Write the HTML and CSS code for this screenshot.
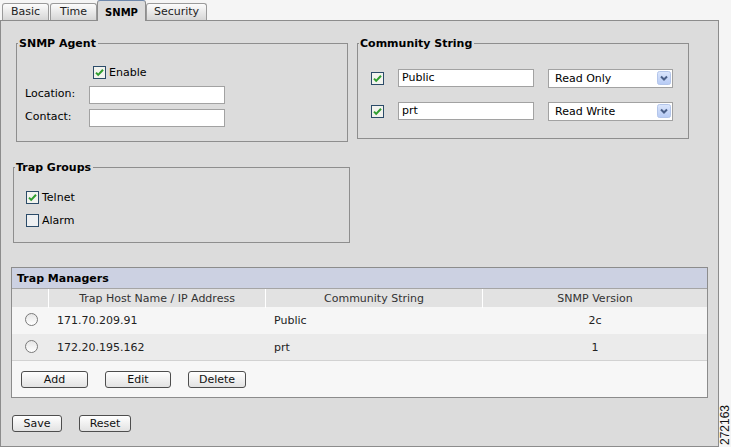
FILE: index.html
```html
<!DOCTYPE html>
<html>
<head>
<meta charset="utf-8">
<link rel="stylesheet" href="styles.css">
</head>
<body>
<div class="page">
  <div class="main">
    <div class="tabs">
      <div class="tab t-basic">Basic</div>
      <div class="tab t-time">Time</div>
      <div class="tab active t-snmp">SNMP</div>
      <div class="tab t-sec">Security</div>
    </div>
    <div class="panel">
      <div class="top">
        <div class="left">
          <div class="group agent">
            <div class="legend">SNMP Agent</div>
            <div class="agent-body">
              <div class="check-row enable">
                <svg class="cb" width="13" height="13" viewBox="0 0 13 13"><rect x="0.5" y="0.5" width="12" height="12" fill="#f2f3ee" stroke="#2b4b69"/><path d="M3 6.6l2.2 2.3L10 3.8" fill="none" stroke="#2f9e2f" stroke-width="2"/></svg>
                <span>Enable</span>
              </div>
              <div class="field"><span class="lbl">Location:</span><span class="input"></span></div>
              <div class="field"><span class="lbl">Contact:</span><span class="input"></span></div>
            </div>
          </div>
          <div class="group traps">
            <div class="legend">Trap Groups</div>
            <div class="traps-body">
              <div class="check-row">
                <svg class="cb" width="13" height="13" viewBox="0 0 13 13"><rect x="0.5" y="0.5" width="12" height="12" fill="#f2f3ee" stroke="#2b4b69"/><path d="M3 6.6l2.2 2.3L10 3.8" fill="none" stroke="#2f9e2f" stroke-width="2"/></svg>
                <span>Telnet</span>
              </div>
              <div class="check-row">
                <svg class="cb" width="13" height="13" viewBox="0 0 13 13"><rect x="0.5" y="0.5" width="12" height="12" fill="#eef0f2" stroke="#2b4b69"/></svg>
                <span>Alarm</span>
              </div>
            </div>
          </div>
        </div>
        <div class="group community">
          <div class="legend">Community String</div>
          <div class="community-body">
            <div class="crow">
              <svg class="cb" width="13" height="13" viewBox="0 0 13 13"><rect x="0.5" y="0.5" width="12" height="12" fill="#f2f3ee" stroke="#2b4b69"/><path d="M3 6.6l2.2 2.3L10 3.8" fill="none" stroke="#2f9e2f" stroke-width="2"/></svg>
              <span class="input">Public</span>
              <div class="select"><span>Read Only</span>
                <svg width="14" height="14" viewBox="0 0 14 14"><defs><linearGradient id="ag" x1="0" y1="0" x2="0" y2="1"><stop offset="0" stop-color="#dbe6fc"/><stop offset="1" stop-color="#b6caf4"/></linearGradient></defs><rect x="0.5" y="0.5" width="13" height="13" rx="2" fill="url(#ag)" stroke="#b3c5ea"/><path d="M4 5.5l3 3 3-3" fill="none" stroke="#4a5f88" stroke-width="2"/></svg>
              </div>
            </div>
            <div class="crow">
              <svg class="cb" width="13" height="13" viewBox="0 0 13 13"><rect x="0.5" y="0.5" width="12" height="12" fill="#f2f3ee" stroke="#2b4b69"/><path d="M3 6.6l2.2 2.3L10 3.8" fill="none" stroke="#2f9e2f" stroke-width="2"/></svg>
              <span class="input">prt</span>
              <div class="select"><span>Read Write</span>
                <svg width="14" height="14" viewBox="0 0 14 14"><rect x="0.5" y="0.5" width="13" height="13" rx="2" fill="url(#ag)" stroke="#b3c5ea"/><path d="M4 5.5l3 3 3-3" fill="none" stroke="#4a5f88" stroke-width="2"/></svg>
              </div>
            </div>
          </div>
        </div>
      </div>

      <div class="managers">
        <div class="mhead">Trap Managers</div>
        <div class="grow cols">
          <div class="c"></div>
          <div class="c">Trap Host Name / IP Address</div>
          <div class="c">Community String</div>
          <div class="c last">SNMP Version</div>
        </div>
        <div class="grow row r1">
          <div><span class="radio"></span></div>
          <div class="tx">171.70.209.91</div>
          <div class="tx">Public</div>
          <div class="ctr">2c</div>
        </div>
        <div class="grow row r2">
          <div><span class="radio"></span></div>
          <div class="tx">172.20.195.162</div>
          <div class="tx">prt</div>
          <div class="ctr">1</div>
        </div>
        <div class="mbtns">
          <div class="btn b-add">Add</div>
          <div class="btn b-edit">Edit</div>
          <div class="btn b-del">Delete</div>
        </div>
      </div>

      <div class="actions">
        <div class="btn b-save">Save</div>
        <div class="btn b-reset">Reset</div>
      </div>
    </div>
  </div>
  <div class="side"><span>272163</span></div>
</div>
</body>
</html>
```
FILE: styles.css
```css
body {
  margin: 0;
  background: #f5f5f5;
  font: 11px/13px "DejaVu Sans", Verdana, sans-serif;
  color: #000;
}
.page {
  display: flex;
  width: 731px;
  height: 447px;
}
.main {
  width: 719px;
  display: flex;
  flex-direction: column;
}
.tabs {
  display: flex;
  align-items: flex-end;
  height: 20px;
  padding-left: 2px;
}
.tab {
  box-sizing: border-box;
  height: 17px;
  border: 1px solid #9a9a9a;
  border-bottom: none;
  border-radius: 3px 3px 0 0;
  background: linear-gradient(#fcfcfc, #d6d6d6);
  text-align: center;
  line-height: 15px;
  color: #222;
}
.t-basic { width: 47px; margin-right: 1px; }
.t-time { width: 47px; }
.t-snmp { width: 49px; }
.t-sec { width: 61px; }
.tab.active {
  height: 21px;
  margin-bottom: -1px;
  background: #dcdcdc;
  border-color: #8d8d8d;
  border-top-color: #6f88ab;
  font-weight: bold;
  font-size: 10px;
  padding-top: 2px;
  line-height: 19px;
  color: #000;
  position: relative;
  z-index: 1;
}
.panel {
  box-sizing: border-box;
  height: 427px;
  border: 1px solid #8c8c8c;
  background: #dcdcdc;
}
.top {
  display: flex;
  align-items: flex-start;
  padding: 22px 0 0 12px;
}
.left {
  width: 337px;
  display: flex;
  flex-direction: column;
}
.group {
  box-sizing: border-box;
  border: 1px solid #8e8e8e;
}
.legend {
  width: max-content;
  margin: -7px 0 0 1px;
  padding: 0 2px 0 1px;
  background: #dcdcdc;
  font-weight: bold;
  line-height: 13px;
}
.agent {
  width: 332px;
  height: 99px;
  margin-left: 3px;
}
.agent-body {
  padding: 16px 0 0 8px;
}
.check-row {
  display: flex;
  align-items: center;
  height: 13px;
  gap: 3px;
}
.cb { display: block; flex: none; }
.enable { margin-left: 68px; }
.field {
  display: flex;
  align-items: center;
  height: 18px;
  margin-top: 5px;
}
.enable + .field { margin-top: 7px; }
.lbl { width: 64px; padding-bottom: 3px; }
.input {
  box-sizing: border-box;
  width: 136px;
  height: 18px;
  border: 1px solid #a2a2a2;
  background: #fff;
  padding-left: 3px;
  line-height: 16px;
}
.traps {
  width: 337px;
  height: 76px;
  margin-top: 25px;
}
.traps-body {
  padding: 17px 0 0 12px;
  display: flex;
  flex-direction: column;
  gap: 10px;
}
.community {
  width: 332px;
  height: 96px;
  margin-left: 7px;
}
.community-body {
  padding: 19px 0 0 13px;
  display: flex;
  flex-direction: column;
  gap: 15px;
}
.crow {
  display: flex;
  align-items: center;
  height: 18px;
}
.crow .input { margin-left: 14px; }
.select {
  box-sizing: border-box;
  margin-left: 14px;
  width: 125px;
  height: 19px;
  display: flex;
  align-items: center;
  justify-content: space-between;
  border: 1px solid #a2a2a2;
  background: #fff;
  padding: 0 1px 0 6px;
}
.select svg { display: block; }
.managers {
  box-sizing: border-box;
  width: 697px;
  height: 131px;
  margin: 24px 0 0 10px;
  border: 1px solid #8c8c8c;
  background: #f7f7f7;
}
.mhead {
  height: 20px;
  border-bottom: 1px solid #a5a5a5;
  background: #ccd1e2;
  font-weight: bold;
  padding-left: 5px;
  line-height: 21px;
}
.grow {
  display: grid;
  grid-template-columns: 37px 217px 217px 1fr;
}
.cols {
  height: 18px;
  background: #e2e2e2;
  color: #333;
  line-height: 19px;
  text-align: center;
}
.cols .c { border-right: 1px solid #fff; }
.cols .c.last { border-right: none; }
.row {
  height: 27px;
  align-items: center;
  color: #222;
}
.r1 { background: #f6f6f6; }
.r2 { background: #ebebeb; height: 26px; }
.radio {
  display: block;
  box-sizing: border-box;
  width: 13px;
  height: 13px;
  margin: 0 0 2px 13px;
  border: 1px solid #7a7a7a;
  border-radius: 50%;
  background: linear-gradient(#e6e6e6, #fff);
}
.tx { padding-left: 8px; }
.ctr { text-align: center; }
.mbtns {
  border-top: 1px solid #d2d2d2;
  padding: 10px 0 0 9px;
  display: flex;
  gap: 17px;
}
.btn {
  box-sizing: border-box;
  height: 17px;
  border: 1px solid #4e4e4e;
  border-radius: 3px;
  background: linear-gradient(#ffffff, #e2e2e2);
  text-align: center;
  line-height: 15px;
  color: #111;
}
.b-add { width: 67px; }
.b-edit { width: 66px; }
.b-del { width: 58px; }
.actions {
  display: flex;
  gap: 17px;
  padding: 17px 0 0 11px;
}
.b-save { width: 50px; }
.b-reset { width: 52px; }
.side {
  width: 12px;
  display: flex;
  align-items: flex-end;
  justify-content: center;
  padding-bottom: 2px;
  box-sizing: border-box;
}
.side span {
  writing-mode: vertical-rl;
  transform: rotate(180deg);
  font: 12px/12px "Liberation Sans", Arial, sans-serif;
  color: #111;
}
```
